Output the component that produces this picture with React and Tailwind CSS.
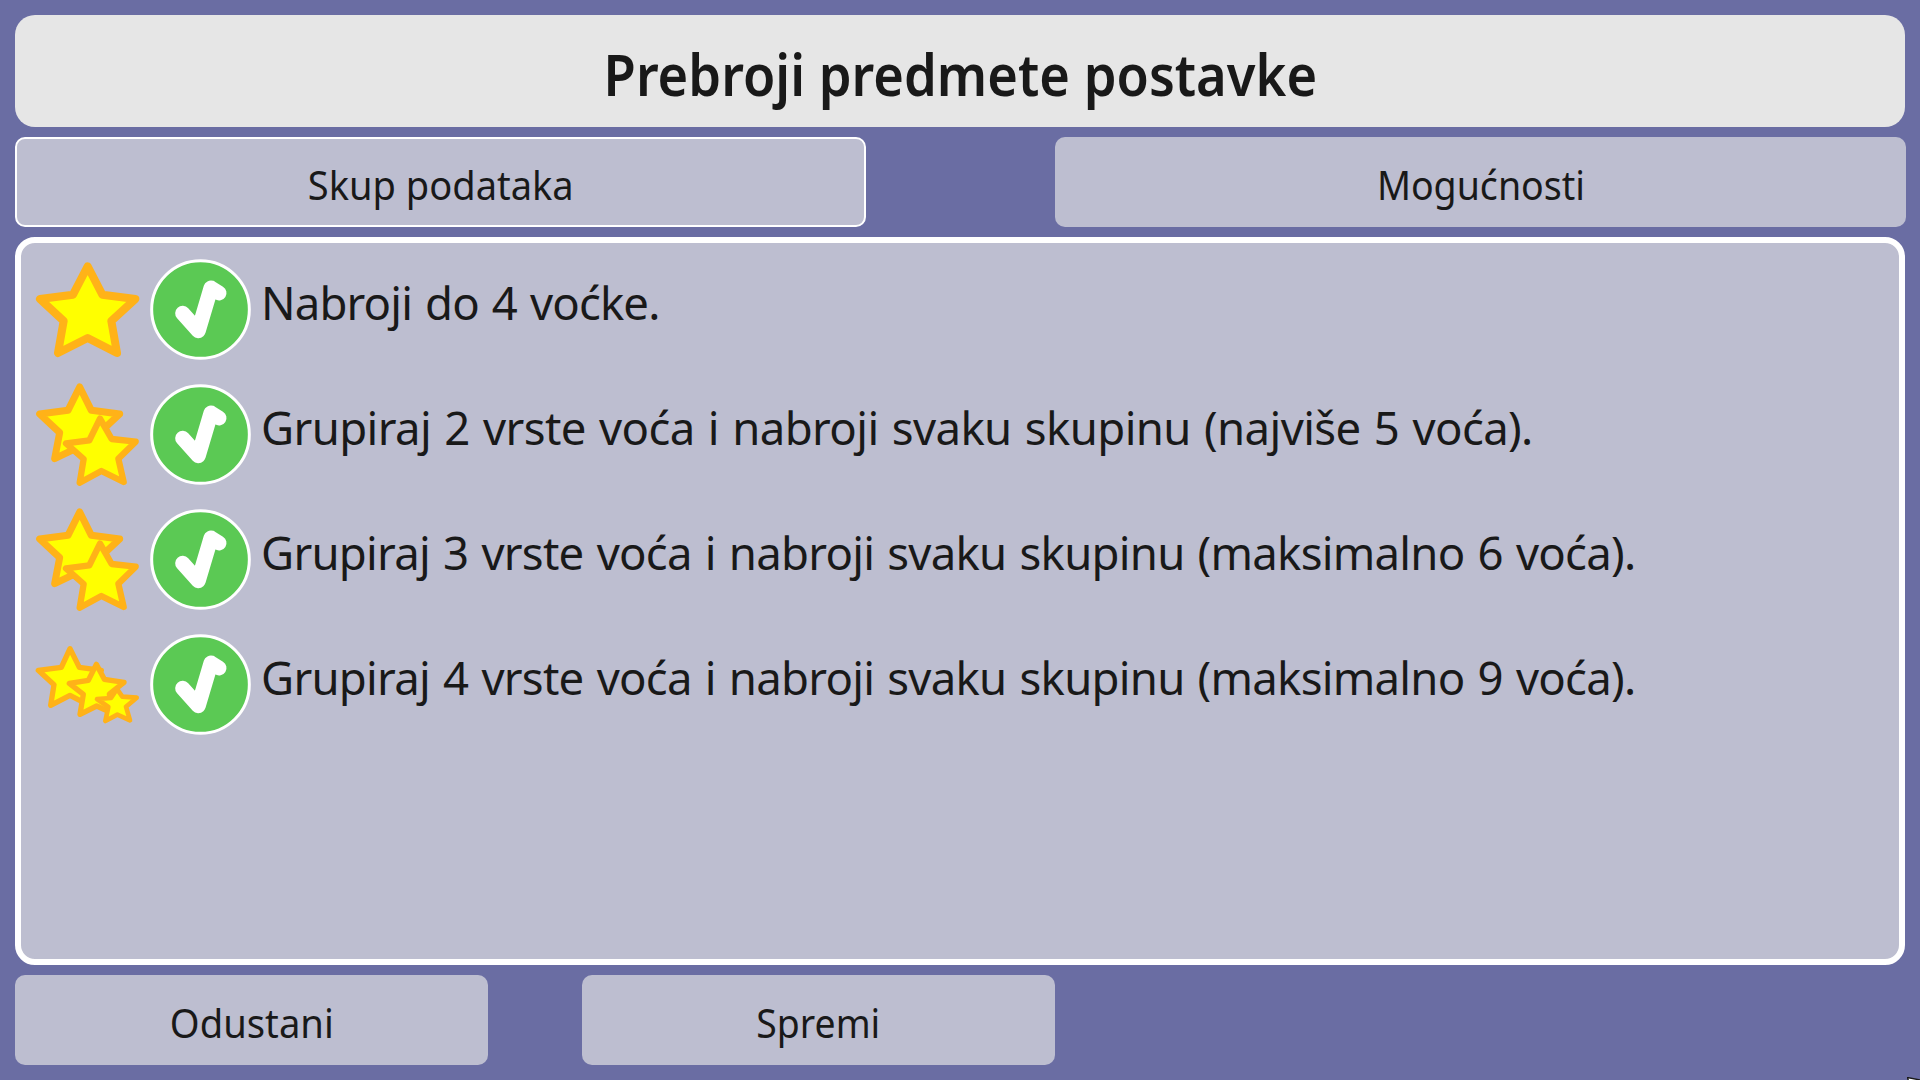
const STARS = {
  one: {
    viewBox: "105 81 315 315",
    shapes: [
      { w: 24, p: "263,109 307,194 406,207 334,273 351,369 263,324 174,369 191,273 120,207 219,194" },
    ],
  },
  two: {
    viewBox: "105 36 315 315",
    shapes: [
      { w: 21, p: "239,51 274,121 359,132 299,188 315,266 239,230 164,266 179,188 119,132 204,121" },
      { w: 19, p: "300,146 335,207 407,215 355,266 371,336 304,303 239,338 251,267 198,220 268,211" },
    ],
  },
  three: {
    viewBox: "105 36 315 315",
    shapes: [
      { w: 16, p: "210,86 238,142 304,151 258,194 268,256 210,226 152,256 162,194 115,151 184,142" },
      { w: 16, p: "289,133 313,178 372,187 328,222 338,280 290,258 240,283 250,223 208,190 265,181" },
      { w: 14, p: "351,207 367,230 410,233 378,260 390,301 352,284 316,303 325,261 291,237 333,234" },
    ],
  },
};

const ROWS = [
  { stars: "one", tracking: "tracking-[-0.85px]", text: "Nabroji do 4 voćke." },
  { stars: "two", tracking: "tracking-[-0.6px]", text: "Grupiraj 2 vrste voća i nabroji svaku skupinu (najviše 5 voća)." },
  { stars: "two", tracking: "tracking-[-0.74px]", text: "Grupiraj 3 vrste voća i nabroji svaku skupinu (maksimalno 6 voća)." },
  { stars: "three", tracking: "tracking-[-0.74px]", text: "Grupiraj 4 vrste voća i nabroji svaku skupinu (maksimalno 9 voća)." },
];

function Stars({ kind }) {
  const { viewBox, shapes } = STARS[kind];
  return (
    <svg viewBox={viewBox} className="size-[105px] shrink-0" aria-hidden="true">
      {shapes.map((s) => (
        <polygon
          key={s.p}
          points={s.p}
          fill="#ffff00"
          stroke="#ffb218"
          strokeWidth={s.w}
          strokeLinejoin="round"
        />
      ))}
    </svg>
  );
}

function Check() {
  return (
    <svg viewBox="449 87 303 303" className="ml-[10px] size-[101px] shrink-0" aria-hidden="true">
      <circle cx="600.5" cy="238.5" r="146.5" fill="#5bc954" stroke="#ffffff" strokeWidth="9" />
      <path
        d="M547 250 L594 302 L632 174 L656 189"
        fill="none"
        stroke="#ffffff"
        strokeWidth="45"
        strokeLinecap="round"
        strokeLinejoin="round"
      />
    </svg>
  );
}

function Button({ className, children }) {
  return (
    <button
      type="button"
      className={`h-[90px] rounded-[10px] bg-[#bdbed0] pt-[6px] text-center text-[40px] leading-[54px] ${className}`}
    >
      {children}
    </button>
  );
}

export default function App() {
  return (
    <div className="relative flex h-[1080px] w-[1920px] flex-col gap-[10px] overflow-hidden bg-[#6a6da3] p-[15px] font-['Noto_Sans',sans-serif] text-[#191919]">
      <h1 className="flex h-[112px] items-center justify-center rounded-[20px] bg-[#e6e6e6] pt-[6px] text-[57px] leading-none font-semibold whitespace-nowrap">
        <span className="inline-block scale-x-[0.921]">Prebroji predmete postavke</span>
      </h1>

      <div className="-mr-px flex justify-between">
        <Button className="w-[851px] border-2 border-white">
          <span className="inline-block scale-x-[0.951]">Skup podataka</span>
        </Button>
        <Button className="w-[851px]">
          <span className="inline-block scale-x-[0.938]">Mogućnosti</span>
        </Button>
      </div>

      <main className="flex h-[728px] flex-col gap-[20px] rounded-[20px] border-6 border-white bg-[#bdbed0] pt-[14px] pl-[14px]">
        {ROWS.map((row) => (
          <div key={row.text} className="flex h-[105px]">
            <Stars kind={row.stars} />
            <div className="pt-[2px]">
              <Check />
            </div>
            <p className={`ml-[10px] pt-[14px] text-[45.5px] leading-[62px] whitespace-nowrap [word-spacing:2px] ${row.tracking}`}>
              {row.text}
            </p>
          </div>
        ))}
      </main>

      <div className="flex gap-[94px]">
        <Button className="w-[473px]">
          <span className="inline-block scale-x-[0.955]">Odustani</span>
        </Button>
        <Button className="w-[473px]">
          <span className="inline-block scale-x-[0.935]">Spremi</span>
        </Button>
      </div>

      <svg className="absolute right-0 bottom-0 h-[3px] w-[13px]" viewBox="0 0 13 3" aria-hidden="true">
        <path d="M0.5 0.5 L13 3 V6 L2 6 Z" fill="#ffffff" stroke="#191919" strokeWidth="1.4" />
      </svg>
    </div>
  );
}
